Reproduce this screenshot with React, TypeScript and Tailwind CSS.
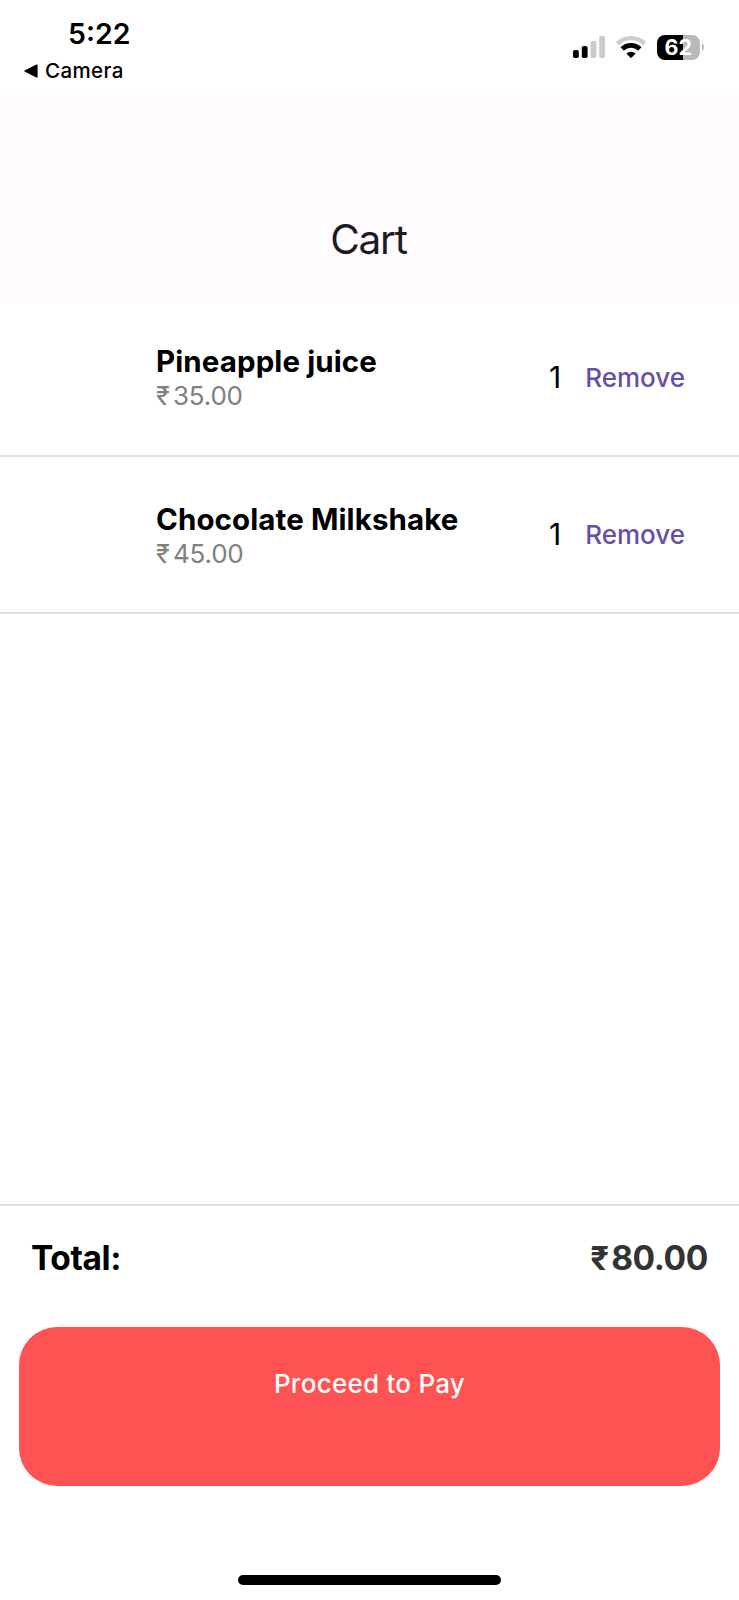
type CartItem = { name: string; price: string; quantity: number };

const items: CartItem[] = [
  { name: 'Pineapple juice', price: '35.00', quantity: 1 },
  { name: 'Chocolate Milkshake', price: '45.00', quantity: 1 },
];

function SignalIcon() {
  return (
    <svg width="32" height="22" viewBox="0 0 32 22">
      <rect x="0" y="14" width="5.8" height="8" rx="1.8" fill="#000" />
      <rect x="8.8" y="10" width="5.8" height="12" rx="1.8" fill="#000" />
      <rect x="17.6" y="5" width="5.8" height="17" rx="1.8" fill="#cbcbcb" />
      <rect x="26.2" y="0" width="5.8" height="22" rx="1.8" fill="#cbcbcb" />
    </svg>
  );
}

function WifiIcon() {
  return (
    <svg width="32" height="24" viewBox="0 0 32 24" fill="none">
      <path d="M2.4 8.6A19.6 19.6 0 0 1 29.6 8.6" stroke="#cbcbcb" strokeWidth="4.4" />
      <path d="M7.2 14A12.4 12.4 0 0 1 24.8 14" stroke="#000" strokeWidth="4.8" />
      <path d="M11.4 18.6A6.6 6.6 0 0 1 20.6 18.6L16.8 22.6Q16 23.4 15.2 22.6Z" fill="#000" />
    </svg>
  );
}

function BatteryIcon() {
  return (
    <div className="flex items-center">
      <div className="flex h-[25px] w-[43.5px] items-center justify-center rounded-[8px] bg-linear-to-r from-black from-[61%] to-[#b9b9b9] to-[61%] pt-px text-[21.5px] leading-none font-bold text-white">
        62
      </div>
      <svg className="ml-[2px]" width="2" height="8" viewBox="0 0 2 8">
        <path d="M0 0C2.6 1 2.6 7 0 8Z" fill="#b9b9b9" />
      </svg>
    </div>
  );
}

function StatusBar() {
  return (
    <div className="flex h-[88px] justify-between bg-white">
      <div className="pt-[16px] pl-[24px]">
        <div className="pl-[44px] text-[28.5px] leading-[35px] font-semibold">5:22</div>
        <div className="mt-[8px] flex items-center text-[20.5px] leading-[24px] font-medium tracking-[0.4px]">
          <svg className="mr-[7px]" width="14" height="14" viewBox="0 0 14 14">
            <path d="M1 6.2 12.4.6Q13.6 0 13.6 1.3V12.7Q13.6 14 12.4 13.4L1 7.8Q-.4 7 1 6.2Z" />
          </svg>
          Camera
        </div>
      </div>
      <div className="flex h-[94px] items-center pr-[35px]">
        <SignalIcon />
        <div className="ml-[10px]">
          <WifiIcon />
        </div>
        <div className="ml-[9.5px]">
          <BatteryIcon />
        </div>
      </div>
    </div>
  );
}

function CartRow({ item }: { item: CartItem }) {
  return (
    <li className="flex h-[157.5px] items-center border-b-2 border-[#e0e0e0] pr-[54px] pl-[156px]">
      <div className="flex-1 pt-[2px]">
        <div className="text-[29.5px] leading-[36px] font-bold tracking-[0.1px]">{item.name}</div>
        <div className="pt-px text-[26px] leading-[32px] tracking-[-0.2px] text-[#808080]">
          <span className="inline-block w-[17px] text-[25.5px] leading-none">₹</span>
          {item.price}
        </div>
      </div>
      <div className="text-[30px] leading-[36px]">{item.quantity}</div>
      <button className="ml-[24px] pt-[2px] text-[26px] leading-[32px] font-medium text-[#6750a4]">Remove</button>
    </li>
  );
}

export default function App() {
  return (
    <div className="flex h-[1600px] w-[739px] flex-col bg-white font-['Inter',sans-serif] text-black">
      <StatusBar />
      <header className="flex h-[211px] justify-center bg-[#fffbff] pt-[128px] pr-[2px]">
        <h1 className="text-[40.5px] leading-[48px] tracking-[-1.2px] text-[#1c1b1f]">Cart</h1>
      </header>
      <ul className="flex-1">
        {items.map((item) => (
          <CartRow key={item.name} item={item} />
        ))}
      </ul>
      <footer className="h-[396px] border-t-2 border-[#e0e0e0] px-[19px]">
        <div className="flex h-[101px] items-center justify-between pt-[2px] pr-[12px] pl-[12px] text-[33.5px] leading-[40px] font-bold">
          <span className="tracking-[-0.4px]">Total:</span>
          <span className="text-[#333333]">
            <span className="inline-block w-[21px] text-[33px] leading-none">₹</span>
            <span className="tracking-[-0.4px]">80.00</span>
          </span>
        </div>
        <button className="mt-[20px] flex h-[159px] w-full justify-center rounded-[38px] bg-[#ff5252] pt-[41px] text-[26px] leading-[32px] font-medium tracking-[0.25px] text-white">
          Proceed to Pay
        </button>
        <div className="mx-auto mt-[89px] h-[10px] w-[263px] rounded-full bg-black" />
      </footer>
    </div>
  );
}
